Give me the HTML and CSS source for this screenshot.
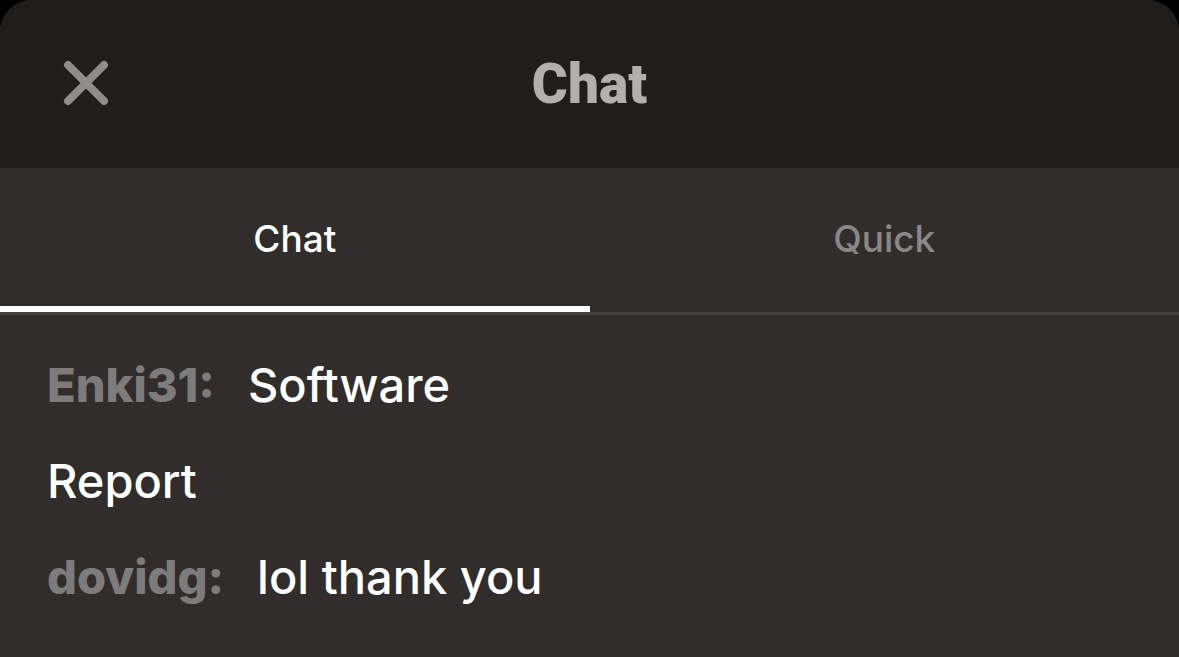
FILE: index.html
```html
<!DOCTYPE html>
<html lang="en">
<head>
  <meta charset="UTF-8">
  <meta name="viewport" content="width=device-width, initial-scale=1.0">
  <title>Chat</title>
  <link rel="stylesheet" href="styles.css">
</head>
<body>
  <div class="sheet">
    <header class="sheet-header">
      <span class="close-btn">
        <svg width="46" height="46" viewBox="0 0 46 46">
          <path d="M5 5 L41 41 M41 5 L5 41" stroke="#8e8d8c" stroke-width="8" stroke-linecap="round" fill="none"/>
        </svg>
      </span>
      <h1>Chat</h1>
      <span></span>
    </header>

    <nav class="tabs">
      <div class="tab active">Chat</div>
      <div class="tab">Quick</div>
    </nav>

    <main class="messages">
      <p class="msg"><span class="user">Enki31:</span>Software<br>Report</p>
      <p class="msg"><span class="user">dovidg:</span>lol thank you</p>
    </main>
  </div>
</body>
</html>
```

FILE: styles.css
```css
:root {
  --header-bg: #1f1e1d;
  --panel-bg: #302d2b;
  --text-color: #fff;
  --muted: #8a8886;
  --user-color: #7e7c7a;
}

body {
  margin: 0;
  background: #000;
  font-family: 'Inter', 'Roboto', sans-serif;
  color: var(--text-color);
}

.sheet {
  height: 657px;
  border-radius: 32px 32px 0 0;
  overflow: hidden;
  background: var(--panel-bg);
}

.sheet-header {
  height: 168px;
  background: var(--header-bg);
  display: grid;
  grid-template-columns: 1fr auto 1fr;
  align-items: center;
}

.close-btn {
  padding-left: 63px;
  display: flex;
  margin-top: -2px;
}

.sheet-header h1 {
  margin: 0;
  font-family: 'Roboto', sans-serif;
  font-weight: 900;
  font-size: 55px;
  color: #b1b0af;
}

.tabs {
  display: flex;
  height: 144px;
  border-bottom: 3px solid #454240;
}

.tab {
  flex: 1;
  display: flex;
  justify-content: center;
  align-items: center;
  padding-bottom: 4px;
  font-weight: 500;
  font-size: 37px;
  color: var(--muted);
  position: relative;
}

.tab.active {
  color: var(--text-color);
}

.tab.active::after {
  content: '';
  position: absolute;
  left: 0;
  right: 0;
  bottom: 0;
  height: 6px;
  background: #fff;
}

.messages {
  padding: 22px 47px 0;
}

.msg {
  margin: 0;
  font-size: 47px;
  line-height: 96px;
  font-weight: 500;
}

.user {
  color: var(--user-color);
  font-weight: 800;
  margin-right: 33px;
}
```
